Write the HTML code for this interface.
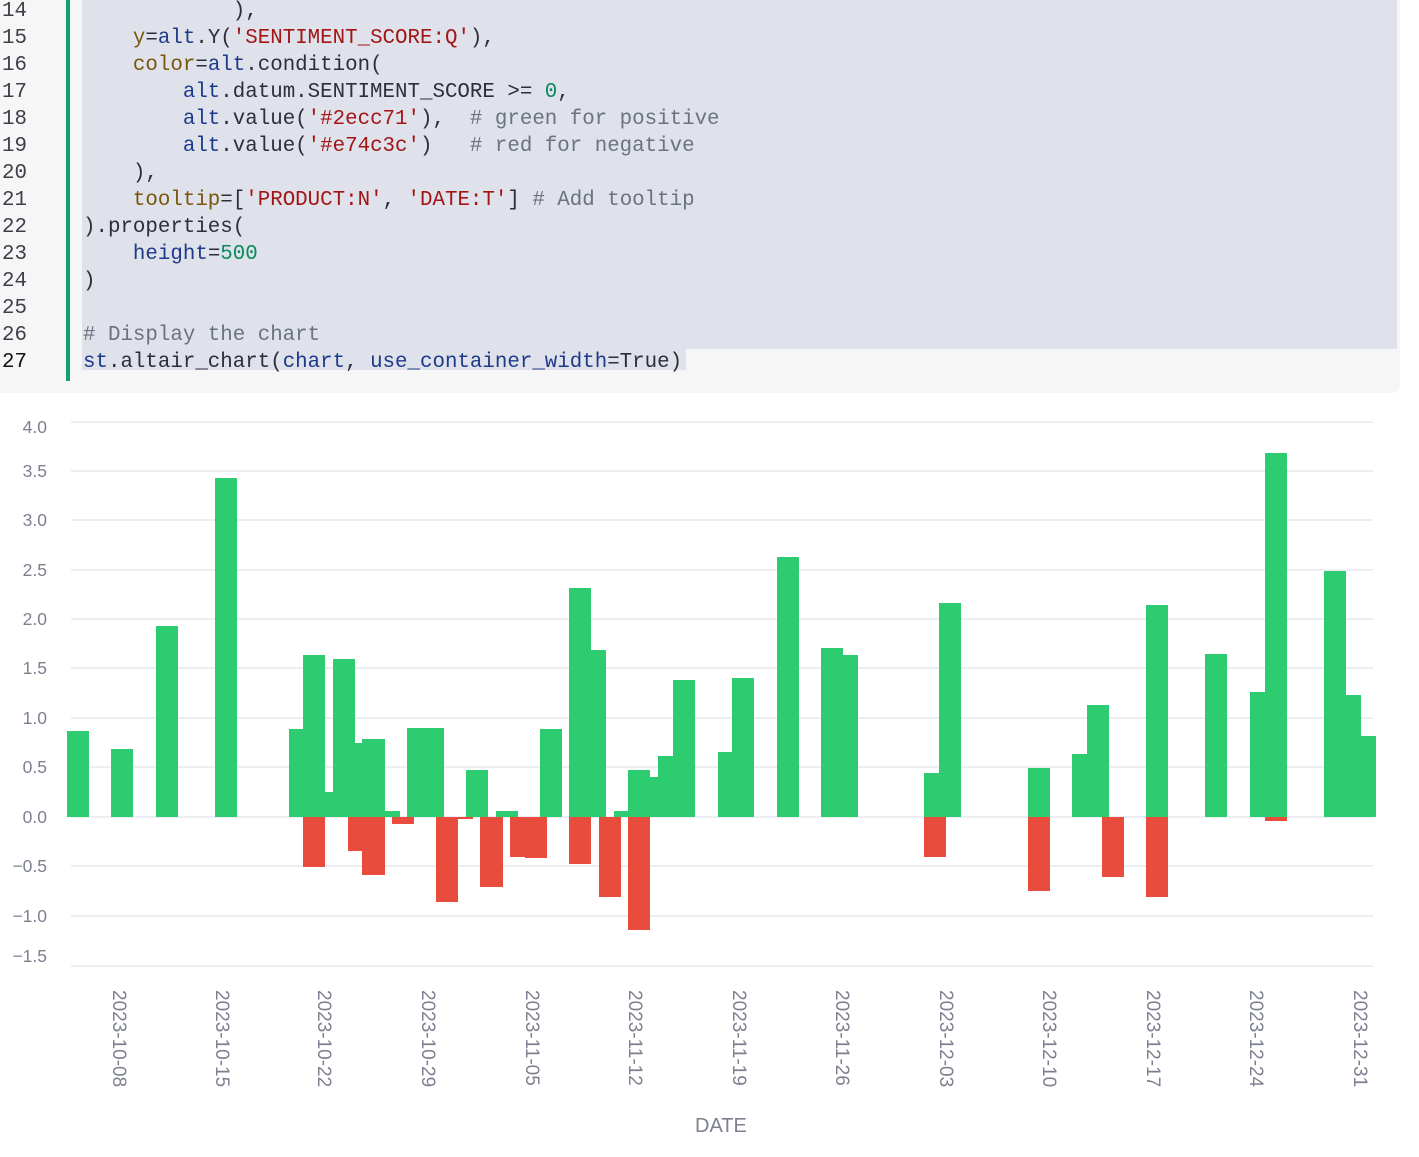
<!DOCTYPE html>
<html><head><meta charset="utf-8"><style>
body{margin:0;width:1419px;height:1157px;background:#fff;position:relative;overflow:hidden;font-family:"Liberation Sans",sans-serif}
.code{position:absolute;left:0;top:0;width:1400px;height:393px;background:#f6f6f7;border-radius:0 0 8px 0}
.sel{position:absolute;background:#dfe2ea}
.gbar{position:absolute;left:66px;top:0;width:4px;height:381px;background:#16a06b}
.ln{position:absolute;left:2px;font:20.8px "Liberation Mono",monospace;color:#3c3f4a;line-height:27px}
.cl{position:absolute;left:83px;font:20.8px "Liberation Mono",monospace;color:#2b2f3a;white-space:pre;line-height:27px}
.k{color:#7a560d}.a{color:#1e3a8a}.s{color:#a31515}.c{color:#6b7280}.n{color:#0a8a5c}
.yl{position:absolute;right:1372px;font-size:17.5px;color:#7d8090;text-align:right}
.xl{position:absolute;top:990px;writing-mode:vertical-rl;font-size:19px;color:#7d8090;transform:translateX(-50%)}
</style></head><body>
<div class="code"></div>
<div class="sel" style="left:82px;top:0;width:1315px;height:349px"></div>
<div class="sel" style="left:82px;top:349px;width:604px;height:21px"></div>
<div class="gbar"></div>
<div class="ln" style="top:-2px">14</div>
<div class="ln" style="top:25px">15</div>
<div class="ln" style="top:52px">16</div>
<div class="ln" style="top:79px">17</div>
<div class="ln" style="top:106px">18</div>
<div class="ln" style="top:133px">19</div>
<div class="ln" style="top:160px">20</div>
<div class="ln" style="top:187px">21</div>
<div class="ln" style="top:214px">22</div>
<div class="ln" style="top:241px">23</div>
<div class="ln" style="top:268px">24</div>
<div class="ln" style="top:295px">25</div>
<div class="ln" style="top:322px">26</div>
<div class="ln" style="top:349px;color:#111">27</div>
<div class="cl" style="top:-2px">            ),</div>
<div class="cl" style="top:25px">    <span class="k">y</span>=<span class="a">alt</span>.Y(<span class="s">'SENTIMENT_SCORE:Q'</span>),</div>
<div class="cl" style="top:52px">    <span class="k">color</span>=<span class="a">alt</span>.condition(</div>
<div class="cl" style="top:79px">        <span class="a">alt</span>.datum.SENTIMENT_SCORE &gt;= <span class="n">0</span>,</div>
<div class="cl" style="top:106px">        <span class="a">alt</span>.value(<span class="s">'#2ecc71'</span>),  <span class="c"># green for positive</span></div>
<div class="cl" style="top:133px">        <span class="a">alt</span>.value(<span class="s">'#e74c3c'</span>)   <span class="c"># red for negative</span></div>
<div class="cl" style="top:160px">    ),</div>
<div class="cl" style="top:187px">    <span class="k">tooltip</span>=[<span class="s">'PRODUCT:N'</span>, <span class="s">'DATE:T'</span>] <span class="c"># Add tooltip</span></div>
<div class="cl" style="top:214px">).properties(</div>
<div class="cl" style="top:241px">    <span class="a">height</span>=<span class="n">500</span></div>
<div class="cl" style="top:268px">)</div>
<div class="cl" style="top:322px"><span class="c"># Display the chart</span></div>
<div class="cl" style="top:349px"><span class="a">st</span>.altair_chart(<span class="a">chart</span>, <span class="a">use_container_width</span>=True)</div>

<div class="yl" style="top:417px">4.0</div>
<div class="yl" style="top:461px">3.5</div>
<div class="yl" style="top:510px">3.0</div>
<div class="yl" style="top:560px">2.5</div>
<div class="yl" style="top:609px">2.0</div>
<div class="yl" style="top:658px">1.5</div>
<div class="yl" style="top:708px">1.0</div>
<div class="yl" style="top:757px">0.5</div>
<div class="yl" style="top:807px">0.0</div>
<div class="yl" style="top:856px">−0.5</div>
<div class="yl" style="top:906px">−1.0</div>
<div class="yl" style="top:946px">−1.5</div>

<svg style="position:absolute;left:0;top:0" width="1419" height="1157">
<g stroke="#e6e9ef" stroke-width="1.5">
<line x1="71" x2="1373" y1="422" y2="422"/><line x1="71" x2="1373" y1="471" y2="471"/>
<line x1="71" x2="1373" y1="520" y2="520"/><line x1="71" x2="1373" y1="570" y2="570"/>
<line x1="71" x2="1373" y1="619" y2="619"/><line x1="71" x2="1373" y1="668" y2="668"/>
<line x1="71" x2="1373" y1="718" y2="718"/><line x1="71" x2="1373" y1="767" y2="767"/>
<line x1="71" x2="1373" y1="817" y2="817"/><line x1="71" x2="1373" y1="866" y2="866"/>
<line x1="71" x2="1373" y1="916" y2="916"/><line x1="71" x2="1373" y1="966" y2="966"/>
</g>
<g fill="#2ecc71">
<rect x="67" y="731" width="22" height="86"/><rect x="111" y="749" width="22" height="68"/>
<rect x="156" y="626" width="22" height="191"/><rect x="215" y="478" width="22" height="339"/>
<rect x="289" y="729" width="36" height="88"/><rect x="303" y="655" width="22" height="162"/>
<rect x="325" y="792" width="8" height="25"/><rect x="333" y="659" width="22" height="158"/>
<rect x="355" y="743" width="7" height="74"/><rect x="362" y="739" width="23" height="78"/>
<rect x="385" y="811" width="15" height="6"/><rect x="407" y="728" width="37" height="89"/>
<rect x="466" y="770" width="22" height="47"/><rect x="496" y="811" width="22" height="6"/>
<rect x="540" y="729" width="22" height="88"/><rect x="569" y="588" width="22" height="229"/>
<rect x="591" y="650" width="15" height="167"/><rect x="614" y="811" width="14" height="6"/>
<rect x="628" y="770" width="22" height="47"/><rect x="650" y="777" width="8" height="40"/>
<rect x="658" y="756" width="15" height="61"/><rect x="673" y="680" width="22" height="137"/>
<rect x="718" y="752" width="14" height="65"/><rect x="732" y="678" width="22" height="139"/>
<rect x="777" y="557" width="22" height="260"/><rect x="821" y="648" width="22" height="169"/>
<rect x="843" y="655" width="15" height="162"/><rect x="924" y="773" width="15" height="44"/>
<rect x="939" y="603" width="22" height="214"/><rect x="1028" y="768" width="22" height="49"/>
<rect x="1072" y="754" width="15" height="63"/><rect x="1087" y="705" width="22" height="112"/>
<rect x="1146" y="605" width="22" height="212"/><rect x="1205" y="654" width="22" height="163"/>
<rect x="1250" y="692" width="15" height="125"/><rect x="1265" y="453" width="22" height="364"/>
<rect x="1324" y="571" width="22" height="246"/><rect x="1346" y="695" width="15" height="122"/>
<rect x="1361" y="736" width="15" height="81"/>
</g>
<g fill="#e74c3c">
<rect x="303" y="817" width="22" height="50"/><rect x="348" y="817" width="14" height="34"/>
<rect x="362" y="817" width="23" height="58"/><rect x="392" y="817" width="22" height="7"/>
<rect x="436" y="817" width="22" height="85"/><rect x="458" y="817" width="15" height="2"/>
<rect x="480" y="817" width="23" height="70"/><rect x="510" y="817" width="15" height="40"/>
<rect x="525" y="817" width="22" height="41"/><rect x="569" y="817" width="22" height="47"/>
<rect x="599" y="817" width="22" height="80"/><rect x="628" y="817" width="22" height="113"/>
<rect x="924" y="817" width="22" height="40"/><rect x="1028" y="817" width="22" height="74"/>
<rect x="1102" y="817" width="22" height="60"/><rect x="1146" y="817" width="22" height="80"/>
<rect x="1265" y="817" width="22" height="4"/>
</g>
</svg>

<div class="xl" style="left:118px">2023-10-08</div>
<div class="xl" style="left:221px">2023-10-15</div>
<div class="xl" style="left:323px">2023-10-22</div>
<div class="xl" style="left:427px">2023-10-29</div>
<div class="xl" style="left:531px">2023-11-05</div>
<div class="xl" style="left:634px">2023-11-12</div>
<div class="xl" style="left:738px">2023-11-19</div>
<div class="xl" style="left:841px">2023-11-26</div>
<div class="xl" style="left:945px">2023-12-03</div>
<div class="xl" style="left:1048px">2023-12-10</div>
<div class="xl" style="left:1152px">2023-12-17</div>
<div class="xl" style="left:1255px">2023-12-24</div>
<div class="xl" style="left:1359px">2023-12-31</div>
<div style="position:absolute;left:695px;top:1115px;font-size:20px;color:#7d8090">DATE</div>
</body></html>
